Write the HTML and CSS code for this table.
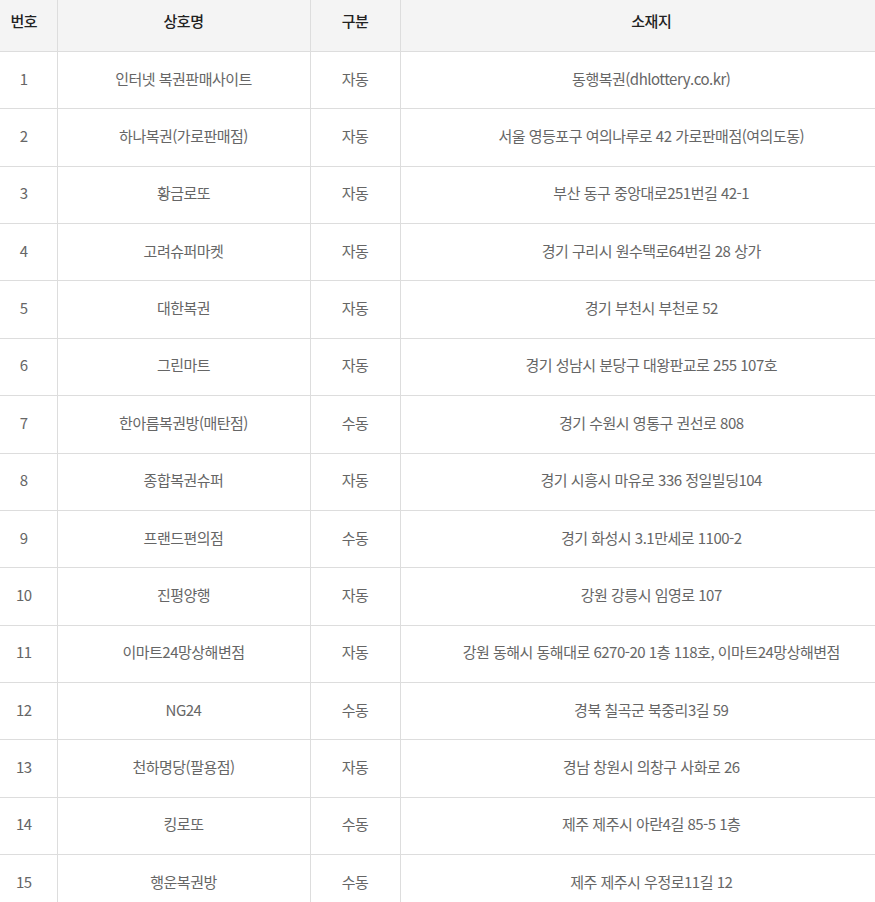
FILE: index.html
```html
<!DOCTYPE html>
<html lang="ko">
<head>
<meta charset="utf-8">
<link rel="stylesheet" href="styles.css">
</head>
<body>
<div class="wrap">
<table class="tbl">
<colgroup><col class="c1"><col class="c2"><col class="c3"><col class="c4"></colgroup>
<thead>
<tr><th>번호</th><th>상호명</th><th>구분</th><th>소재지</th></tr>
</thead>
<tbody>
<tr><td>1</td><td>인터넷 복권판매사이트</td><td>자동</td><td>동행복권(dhlottery.co.kr)</td></tr>
<tr><td>2</td><td>하나복권(가로판매점)</td><td>자동</td><td>서울 영등포구 여의나루로 42 가로판매점(여의도동)</td></tr>
<tr><td>3</td><td>황금로또</td><td>자동</td><td>부산 동구 중앙대로251번길 42-1</td></tr>
<tr><td>4</td><td>고려슈퍼마켓</td><td>자동</td><td>경기 구리시 원수택로64번길 28 상가</td></tr>
<tr><td>5</td><td>대한복권</td><td>자동</td><td>경기 부천시 부천로 52</td></tr>
<tr><td>6</td><td>그린마트</td><td>자동</td><td>경기 성남시 분당구 대왕판교로 255 107호</td></tr>
<tr><td>7</td><td>한아름복권방(매탄점)</td><td>수동</td><td>경기 수원시 영통구 권선로 808</td></tr>
<tr><td>8</td><td>종합복권슈퍼</td><td>자동</td><td>경기 시흥시 마유로 336 정일빌딩104</td></tr>
<tr><td>9</td><td>프랜드편의점</td><td>수동</td><td>경기 화성시 3.1만세로 1100-2</td></tr>
<tr><td>10</td><td>진평양행</td><td>자동</td><td>강원 강릉시 임영로 107</td></tr>
<tr><td>11</td><td>이마트24망상해변점</td><td>자동</td><td>강원 동해시 동해대로 6270-20 1층 118호, 이마트24망상해변점</td></tr>
<tr><td>12</td><td>NG24</td><td>수동</td><td>경북 칠곡군 북중리3길 59</td></tr>
<tr><td>13</td><td>천하명당(팔용점)</td><td>자동</td><td>경남 창원시 의창구 사화로 26</td></tr>
<tr><td>14</td><td>킹로또</td><td>수동</td><td>제주 제주시 아란4길 85-5 1층</td></tr>
<tr><td>15</td><td>행운복권방</td><td>수동</td><td>제주 제주시 우정로11길 12</td></tr>
</tbody>
</table>
</div>
</body>
</html>
```
FILE: styles.css
```css
html, body {
  margin: 0;
  padding: 0;
  background: #fff;
}
body {
  font-family: "Noto Sans CJK KR", "Noto Sans", sans-serif;
  overflow: hidden;
}
.wrap {
  width: 875px;
  overflow: hidden;
}
.tbl {
  width: 911px;
  margin-left: -9px;
  border-collapse: collapse;
  table-layout: fixed;
}
.c1 { width: 66px; }
.c2 { width: 253px; }
.c3 { width: 90px; }
.c4 { width: 502px; }
.tbl th, .tbl td {
  text-align: center;
  padding: 0;
  border-left: 1px solid #ddd;
  border-bottom: 1px solid #ddd;
  letter-spacing: -0.5px;
  font-size: 15px;
  line-height: 20px;
}
.tbl th:first-child, .tbl td:first-child {
  border-left: none;
}
.tbl thead tr {
  height: 51.5px;
}
.tbl th {
  background: #f4f4f4;
  color: #222;
  font-weight: 500;
  vertical-align: middle;
  padding-bottom: 10px;
}
.tbl tbody tr {
  height: 57.36px;
}
.tbl td {
  color: #666;
  font-weight: 400;
  padding-bottom: 3px;
}
```
